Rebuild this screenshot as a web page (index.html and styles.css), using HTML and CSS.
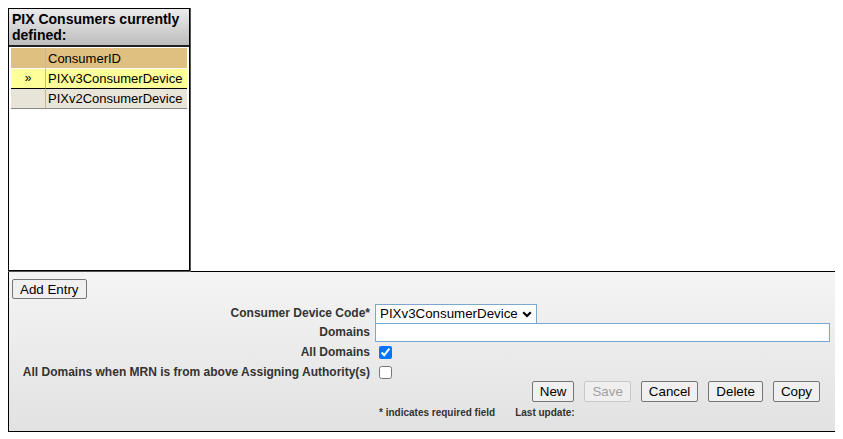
FILE: index.html
```html
<!DOCTYPE html>
<html>
<head>
<meta charset="utf-8">
<link rel="stylesheet" href="styles.css">
</head>
<body>
<div class="listbox">
  <div class="listhead">PIX Consumers currently defined:</div>
  <table class="grid">
    <colgroup><col class="k1"><col class="k2"></colgroup>
    <tr class="hdr"><td class="c1"></td><td class="c2">ConsumerID</td></tr>
    <tr class="sel"><td class="c1">»</td><td class="c2">PIXv3ConsumerDevice</td></tr>
    <tr class="row"><td class="c1"></td><td class="c2">PIXv2ConsumerDevice</td></tr>
  </table>
</div>
<div class="panel">
  <div class="toprow"><button class="btn">Add Entry</button></div>
  <div class="form">
    <label class="lbl">Consumer Device Code*</label>
    <div class="fld"><span class="selwrap"><select class="sel-in"><option>PIXv3ConsumerDevice</option><option>PIXv2ConsumerDevice</option></select><svg class="chev" width="10" height="7" viewBox="0 0 10 7"><polyline points="1.2,1.2 5,5 8.8,1.2" fill="none" stroke="#000" stroke-width="2.2"/></svg></span></div>
    <label class="lbl">Domains</label>
    <div class="fld"><input class="txt" type="text"></div>
    <label class="lbl">All Domains</label>
    <div class="fld"><input class="chk" type="checkbox" checked></div>
    <label class="lbl">All Domains when MRN is from above Assigning Authority(s)</label>
    <div class="fld"><input class="chk" type="checkbox"></div>
  </div>
  <div class="btnrow">
    <button class="btn">New</button>
    <button class="btn" disabled>Save</button>
    <button class="btn">Cancel</button>
    <button class="btn">Delete</button>
    <button class="btn">Copy</button>
  </div>
  <div class="foot"><span>* indicates required field</span><span>Last update:</span></div>
</div>
</body>
</html>
```
FILE: styles.css
```css
body {
  margin: 8px;
  font-family: "Liberation Sans", Arial, sans-serif;
  background: #fff;
  color: #000;
}
.listbox {
  width: 180px;
  height: 261px;
  border: 1px solid #000;
  outline: 1px solid #555;
  background: #fff;
}
.listhead {
  font-weight: bold;
  font-size: 14px;
  line-height: 16px;
  padding: 2px 3px 3px 3px;
  background: linear-gradient(#ececec, #bdbdbd);
  border-bottom: 2px solid #222;
  height: 31px;
}
.grid {
  border-collapse: separate;
  border-spacing: 0;
  table-layout: fixed;
  margin: 1px 2px 0 2px;
  width: 176px;
  font-size: 13px;
}
.grid col.k1 { width: 35px; }
.grid td {
  height: 19px;
  padding: 0 2px;
  line-height: 19px;
  white-space: nowrap;
  overflow: hidden;
}
.grid .c1 {
  text-align: center;
  border-right: 1px solid #c8b890;
}
.grid tr.hdr td { background: #e0c080; height: 20px; }
.grid tr.sel td { background: #ffff99; border-top: 1px solid #fff; border-bottom: 1px solid #000; }
.grid tr.sel .c1 { font-size: 12px; }
.grid tr.row td { background: #e8e4d8; border-bottom: 1px solid #888; }
.panel {
  width: 826px;
  border: 1px solid #000;
  background: linear-gradient(#f4f4f4, #e2e2e2);
  height: 159px;
  padding: 0 0 0 3px;
  display: flex;
  flex-direction: column;
}
.toprow { padding-top: 7px; }
.btn {
  font-family: "Liberation Sans", Arial, sans-serif;
  font-size: 13.333px;
  height: 20px;
  padding: 0 7px;
  background: #f0f0f0;
  border: 1px solid #767676;
  border-radius: 2px;
  color: #000;
}
.btn:disabled {
  color: #a0a0a0;
  border-color: #c8c8c8;
  background: #efefef;
}
.form {
  display: grid;
  grid-template-columns: 358px 1fr;
  column-gap: 5px;
  margin-top: 5px;
}
.lbl {
  text-align: right;
  font-weight: bold;
  font-size: 12px;
  color: #333;
  line-height: 19px;
}
.fld { display: flex; align-items: center; height: 19px; }
.selwrap { position: relative; display: inline-block; height: 20px; }
.sel-in {
  appearance: none;
  -webkit-appearance: none;
  font-family: "Liberation Sans", Arial, sans-serif;
  font-size: 13.333px;
  height: 20px;
  width: 162px;
  padding: 0 0 0 4px;
  border: 1px solid #7ba7d0;
  border-radius: 0;
  background: #fff;
  color: #000;
  margin: 0;
}
.chev {
  position: absolute;
  right: 5px;
  top: 7px;
  pointer-events: none;
}
.txt {
  width: 455px;
  height: 19px;
  box-sizing: border-box;
  border: 1px solid #7ba7d0;
  margin: 0;
}
.chk {
  margin: 0 0 0 4px;
  width: 13px;
  height: 13px;
}
.form .fld:nth-child(6), .form .fld:nth-child(8), .form .lbl:nth-child(5), .form .lbl:nth-child(7) {
  height: 20px;
  line-height: 20px;
}
.btnrow {
  display: flex;
  justify-content: flex-end;
  gap: 10px;
  padding-right: 18px;
  margin-top: -1px;
}
.btnrow .btn { height: 21px; padding: 0 7px; }
.foot {
  display: flex;
  gap: 20px;
  padding-left: 367px;
  margin-top: 5px;
  font-size: 10px;
  font-weight: bold;
  color: #333;
}
```
